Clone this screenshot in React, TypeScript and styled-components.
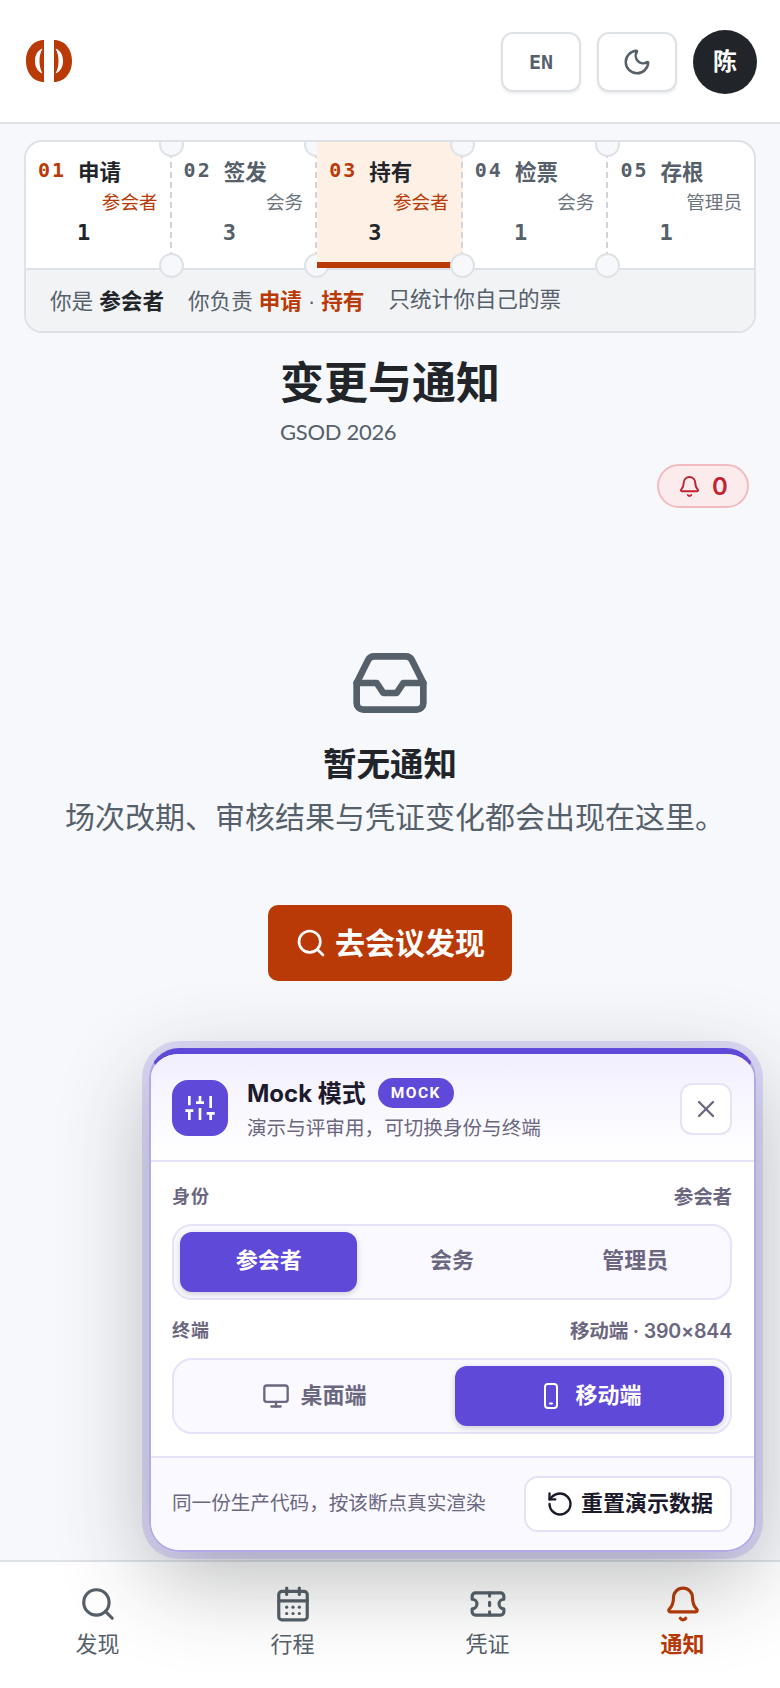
import React from "react";
import styled, { createGlobalStyle } from "styled-components";
import { Moon, Bell, Inbox, Search, X, Monitor, RotateCcw, CalendarDays, Ticket } from "lucide-react";

const Global = createGlobalStyle`
  * { box-sizing: border-box; }
  html, body { margin: 0; padding: 0; }
  body { background: #f6f8fc; font-family: Inter, "Noto Sans CJK SC", sans-serif; color: #212529; }
`;
const MONO = `"DejaVu Sans Mono", "Noto Sans CJK SC", monospace`;
const CJK = `"Noto Sans CJK SC", sans-serif`;
const LATIN = `Inter, "Noto Sans CJK SC", sans-serif`;
const RUST = "#b93a06";
const GRAY = "#56606a";
const VIOLET = "#5f49d8";
const LILAC = "#e6e2f7";
const MUTED = "#6b6780";

const Shell = styled.div`
  position: relative; width: 780px; height: 1688px; display: flex; flex-direction: column; overflow: hidden;
`;
const Header = styled.header`
  height: 124px; background: #fff; border-bottom: 2px solid #dee2e6; padding: 30px 23px 0 26px;
  display: flex; align-items: flex-start; justify-content: space-between; flex: none;
`;
const Logo = styled.svg`width: 48px; height: 42px; margin-top: 10px;`;
const Actions = styled.div`display: flex; align-items: center; gap: 16px;`;
const HeadBtn = styled.button`
  width: 80px; height: 60px; background: #fff; border: 2px solid #dee2e6; border-radius: 12px;
  box-shadow: 0 2px 3px rgba(33,37,41,.08); display: flex; align-items: center; justify-content: center;
  color: ${GRAY}; font: 700 20px ${MONO}; padding: 0;
`;
const Avatar = styled.div`
  width: 64px; height: 64px; border-radius: 50%; background: #212529; color: #fff; padding-bottom: 5px;
  display: flex; align-items: center; justify-content: center; font: 700 24px ${CJK};
`;
const Main = styled.main`flex: 1; padding: 16px 24px 0; display: flex; flex-direction: column; min-height: 0;`;
const Ticketing = styled.section`
  border: 2px solid #dee2e6; border-radius: 18px; overflow: hidden; background: #fff; height: 193px; flex: none;
`;
const Stubs = styled.div`display: grid; grid-template-columns: repeat(5, 1fr); height: 126px;`;
const Stub = styled.div<{ $active?: boolean; $last?: boolean }>`
  position: relative; padding: 13px 12px 0; display: grid; grid-template-columns: auto 1fr; column-gap: 12px;
  grid-auto-rows: 30px; align-items: center;
  background: ${p => (p.$active ? "#fff0e6" : "transparent")};
  ${p => p.$active && `box-shadow: inset 0 -6px 0 ${RUST};`}
  ${p => !p.$last && `
    border-right: 2px dashed #ced4da;
    &::before, &::after {
      content: ""; position: absolute; right: -14px; width: 21px; height: 21px; border-radius: 50%;
      background: #f6f8fc; border: 2px solid #dee2e6;
    }
    &::before { top: -10px; }
    &::after { bottom: -10px; }
  `}
`;
const Num = styled.span<{ $on?: boolean }>`
  font: 700 20px ${MONO}; letter-spacing: 2px; color: ${p => (p.$on ? RUST : GRAY)};
`;
const Name = styled.span<{ $on?: boolean }>`
  font: 700 21.5px ${CJK}; color: ${p => (p.$on ? "#212529" : GRAY)};
`;
const Role = styled.span<{ $on?: boolean }>`
  grid-column: 1 / -1; text-align: right; font: 400 18.6px ${CJK};
  color: ${p => (p.$on ? RUST : "#6c757d")};
`;
const Count = styled.span<{ $on?: boolean }>`
  grid-column: 2; margin: 4px 0 0 -1px; font: 700 22px ${MONO}; color: ${p => (p.$on ? "#212529" : GRAY)};
`;
const Foot = styled.div`
  height: 63px; border-top: 2px solid #dee2e6; background: #f1f3f5; padding: 0 24px 3px; display: flex; align-items: center; gap: 24px;
  font: 400 21.6px "Liberation Sans", ${CJK}; color: ${GRAY};
`;
const Strong = styled.b<{ $rust?: boolean }>`font-weight: 700; color: ${p => (p.$rust ? RUST : "#212529")};`;
const Note = styled.span`padding-bottom: 4px;`;
const TitleWrap = styled.div`align-self: center; margin-top: 21px;`;
const Title = styled.h1`margin: 0; font: 700 44px/53px ${CJK}; color: #212529;`;
const Sub = styled.div`margin-top: 10px; font: 400 22px/30px Lato, sans-serif; letter-spacing: -0.3px; color: ${GRAY};`;
const Pill = styled.div`
  align-self: flex-end; margin: 17px 7px 0 0; width: 92px; height: 44px; border: 2px solid #f1bcc0; background: #fcebed; border-radius: 22px;
  display: flex; align-items: center; justify-content: center; gap: 11px; color: #c1232f; font: 600 24px Inter, sans-serif;
`;
const Empty = styled.div`display: flex; flex-direction: column; align-items: center; margin-top: 135px; color: ${GRAY};`;
const EmptyTitle = styled.h2`margin: 16px 0 0; font: 700 33.5px/46px ${CJK}; color: #212529;`;
const EmptyText = styled.p`margin: 8px 0 0 10px; font: 400 30px/44px ${CJK}; color: ${GRAY};`;
const Cta = styled.button`
  margin-top: 68px; width: 244px; height: 76px; border: 0; border-radius: 10px; background: ${RUST}; color: #fff;
  display: flex; align-items: center; justify-content: center; gap: 8px; font: 700 30px ${CJK}; padding: 0;
`;
const Lifted = styled.span<{ $lift: number }>`display: block; padding-bottom: ${p => p.$lift * 2}px;`;
const Panel = styled.aside`
  position: absolute; left: 149px; top: 1048px; width: 607px; height: 504px; z-index: 5;
  background: #fff; border: 2px solid #b3a8e8; border-top: 6px solid ${VIOLET}; border-radius: 30px; overflow: hidden;
  display: flex; flex-direction: column;
`;
const PanelHalo = styled.div`
  position: absolute; left: 149px; top: 1048px; width: 607px; height: 504px; z-index: 4; border-radius: 30px;
  box-shadow: 0 0 0 7px rgba(95,73,216,.17), 0 28px 90px rgba(33,37,41,.3);
`;
const PanelHead = styled.div`
  height: 108px; flex: none; background: linear-gradient(180deg, #f2effe, #fff); border-bottom: 2px solid ${LILAC};
  padding: 26px 22px 0 21px; display: flex; align-items: flex-start; gap: 19px;
`;
const IconBox = styled.div`
  width: 56px; height: 56px; border-radius: 16px; background: ${VIOLET}; color: #fff; display: flex; align-items: center; justify-content: center; flex: none;
`;
const HeadText = styled.div`flex: 1; margin-top: -5px;`;
const HeadLine = styled.div`display: flex; align-items: center; gap: 12px; height: 32px;`;
const PanelTitle = styled.span`font: 700 24px ${LATIN}; color: #1c1a2b;`;
const Tag = styled.span`
  width: 76px; height: 30px; margin-top: 3px; border-radius: 15px; background: ${VIOLET}; color: #fff; font: 700 15.5px Roboto, sans-serif; letter-spacing: 1.5px;
  display: flex; align-items: center; justify-content: center;
`;
const PanelSub = styled.div`margin-top: 6px; font: 400 19.6px/28px ${CJK}; color: ${MUTED};`;
const CloseBtn = styled.button`
  width: 52px; height: 52px; margin-top: 3px; background: #fff; border: 2px solid ${LILAC}; border-radius: 12px; color: ${MUTED};
  display: flex; align-items: center; justify-content: center; padding: 0; flex: none;
`;
const PanelBody = styled.div`flex: 1; padding: 19px 22px 0 21px;`;
const RowHead = styled.div`display: flex; align-items: center; justify-content: space-between; height: 28px;`;
const Label = styled.span`font: 700 18px ${CJK}; color: ${MUTED}; letter-spacing: 1px;`;
const Value = styled.span`font: 600 19.6px ${LATIN}; letter-spacing: -0.2px; color: ${MUTED};`;
const Segment = styled.div<{ $cols: number }>`
  margin-top: 15px; margin-bottom: 15px; height: 76px; border: 2px solid ${LILAC}; border-radius: 20px; background: #faf9ff; padding: 6px;
  display: grid; grid-template-columns: repeat(${p => p.$cols}, 1fr); gap: 6px;
`;
const Option = styled.div<{ $on?: boolean }>`
  border-radius: 12px; display: flex; align-items: center; justify-content: center; gap: 10px;
  font: 700 22px ${CJK};
  background: ${p => (p.$on ? VIOLET : "transparent")}; color: ${p => (p.$on ? "#fff" : MUTED)};
  ${p => p.$on && `box-shadow: 0 2px 6px rgba(33,37,41,.2);`}
`;
const PanelFoot = styled.div`
  height: 94px; flex: none; border-top: 2px solid ${LILAC}; background: #faf9ff; padding: 0 22px 0 21px;
  display: flex; align-items: center; justify-content: space-between; font: 400 19.6px ${CJK}; color: ${MUTED};
`;
const Reset = styled.button`
  width: 208px; height: 56px; background: #fff; border: 2px solid ${LILAC}; border-radius: 14px; color: #1c1a2b; padding: 0 0 0 3px;
  display: flex; align-items: center; justify-content: center; gap: 7px; font: 700 22px ${CJK};
`;
const Nav = styled.nav`
  height: 128px; flex: none; background: #fff; border-top: 2px solid #dee2e6; display: grid; grid-template-columns: repeat(4, 1fr);
`;
const NavItem = styled.div<{ $on?: boolean }>`
  display: flex; flex-direction: column; align-items: center; padding-top: 23px; color: ${p => (p.$on ? RUST : GRAY)};
  font: ${p => (p.$on ? 700 : 400)} 22px/32px ${CJK}; gap: 3px;
`;

const stubs = [
  { n: "01", name: "申请", role: "参会者", c: "1", mine: true },
  { n: "02", name: "签发", role: "会务", c: "3" },
  { n: "03", name: "持有", role: "参会者", c: "3", mine: true, active: true },
  { n: "04", name: "检票", role: "会务", c: "1" },
  { n: "05", name: "存根", role: "管理员", c: "1" },
];

const Sliders = () => (
  <svg width="32" height="32" viewBox="0 0 24 24" fill="none" stroke="currentColor" strokeWidth="2">
    <path d="M4 21v-7M4 10V3M12 21v-9M12 8V3M20 21v-5M20 12V3M1 14h6M9 8h6M17 16h6" />
  </svg>
);
const Phone = () => (
  <svg width="28" height="28" viewBox="0 0 28 28" fill="none" stroke="currentColor" strokeWidth="2" strokeLinecap="round">
    <rect x="8" y="2" width="12" height="24" rx="3" />
    <path d="M13 21.500h2" />
  </svg>
);

export default function App() {
  return (
    <Shell>
      <Global />
      <Header>
        <Logo viewBox="0 0 48 42" aria-label="logo">
          <path fillRule="evenodd" fill={RUST} d="M18 0C7 0 0 9.5 0 21s7 21 18 21ZM16.5 8.5C11.5 10.5 9 15 9 21s2.500 10.500 7.500 12.500C14 29 13.500 25 13.500 21s.5-8 3-12.500Z" />
          <path fillRule="evenodd" fill={RUST} d="M28 0C39 0 46 9.500 46 21S39 42 28 42ZM29.500 8.500C34.500 10.500 37 15 37 21s-2.500 10.500-7.500 12.500C32 29 32.500 25 32.500 21s-.5-8-3-12.500Z" />
        </Logo>
        <Actions>
          <HeadBtn>EN</HeadBtn>
          <HeadBtn><Moon size={30} strokeWidth={2} /></HeadBtn>
          <Avatar>陈</Avatar>
        </Actions>
      </Header>
      <Main>
        <Ticketing>
          <Stubs>
            {stubs.map((s, i) => (
              <Stub key={s.n} $active={s.active} $last={i === 4}>
                <Num $on={s.mine}>{s.n}</Num>
                <Name $on={s.mine}>{s.name}</Name>
                <Role $on={s.mine}>{s.role}</Role>
                <Count $on={s.mine}>{s.c}</Count>
              </Stub>
            ))}
          </Stubs>
          <Foot>
            <span>你是 <Strong>参会者</Strong></span>
            <span>你负责 <Strong $rust>申请</Strong> · <Strong $rust>持有</Strong></span>
            <Note>只统计你自己的票</Note>
          </Foot>
        </Ticketing>
        <TitleWrap>
          <Title>变更与通知</Title>
          <Sub>GSOD 2026</Sub>
        </TitleWrap>
        <Pill><Bell size={23} strokeWidth={2} />0</Pill>
        <Empty>
          <Inbox size={80} strokeWidth={2} />
          <EmptyTitle>暂无通知</EmptyTitle>
          <EmptyText>场次改期、审核结果与凭证变化都会出现在这里。</EmptyText>
          <Cta><Search size={32} strokeWidth={2} /><Lifted $lift={2}>去会议发现</Lifted></Cta>
        </Empty>
      </Main>
      <PanelHalo />
      <Panel>
        <PanelHead>
          <IconBox><Sliders /></IconBox>
          <HeadText>
            <HeadLine><PanelTitle>Mock 模式</PanelTitle><Tag>MOCK</Tag></HeadLine>
            <PanelSub>演示与评审用，可切换身份与终端</PanelSub>
          </HeadText>
          <CloseBtn><X size={28} strokeWidth={2} /></CloseBtn>
        </PanelHead>
        <PanelBody>
          <RowHead><Label>身份</Label><Value>参会者</Value></RowHead>
          <Segment $cols={3}>
            <Option $on><Lifted $lift={4}>参会者</Lifted></Option>
            <Option><Lifted $lift={4}>会务</Lifted></Option>
            <Option><Lifted $lift={4}>管理员</Lifted></Option>
          </Segment>
          <RowHead><Label>终端</Label><Value>移动端 · 390×844</Value></RowHead>
          <Segment $cols={2}>
            <Option><Monitor size={28} strokeWidth={2} /><Lifted $lift={3}>桌面端</Lifted></Option>
            <Option $on><Phone /><Lifted $lift={3}>移动端</Lifted></Option>
          </Segment>
        </PanelBody>
        <PanelFoot>
          <Lifted $lift={3}>同一份生产代码，按该断点真实渲染</Lifted>
          <Reset><RotateCcw size={28} strokeWidth={2} /><Lifted $lift={3}>重置演示数据</Lifted></Reset>
        </PanelFoot>
      </Panel>
      <Nav>
        <NavItem><Search size={38} strokeWidth={2} />发现</NavItem>
        <NavItem><CalendarDays size={38} strokeWidth={2} />行程</NavItem>
        <NavItem><Ticket size={38} strokeWidth={2} />凭证</NavItem>
        <NavItem $on><Bell size={38} strokeWidth={2} />通知</NavItem>
      </Nav>
    </Shell>
  );
}
